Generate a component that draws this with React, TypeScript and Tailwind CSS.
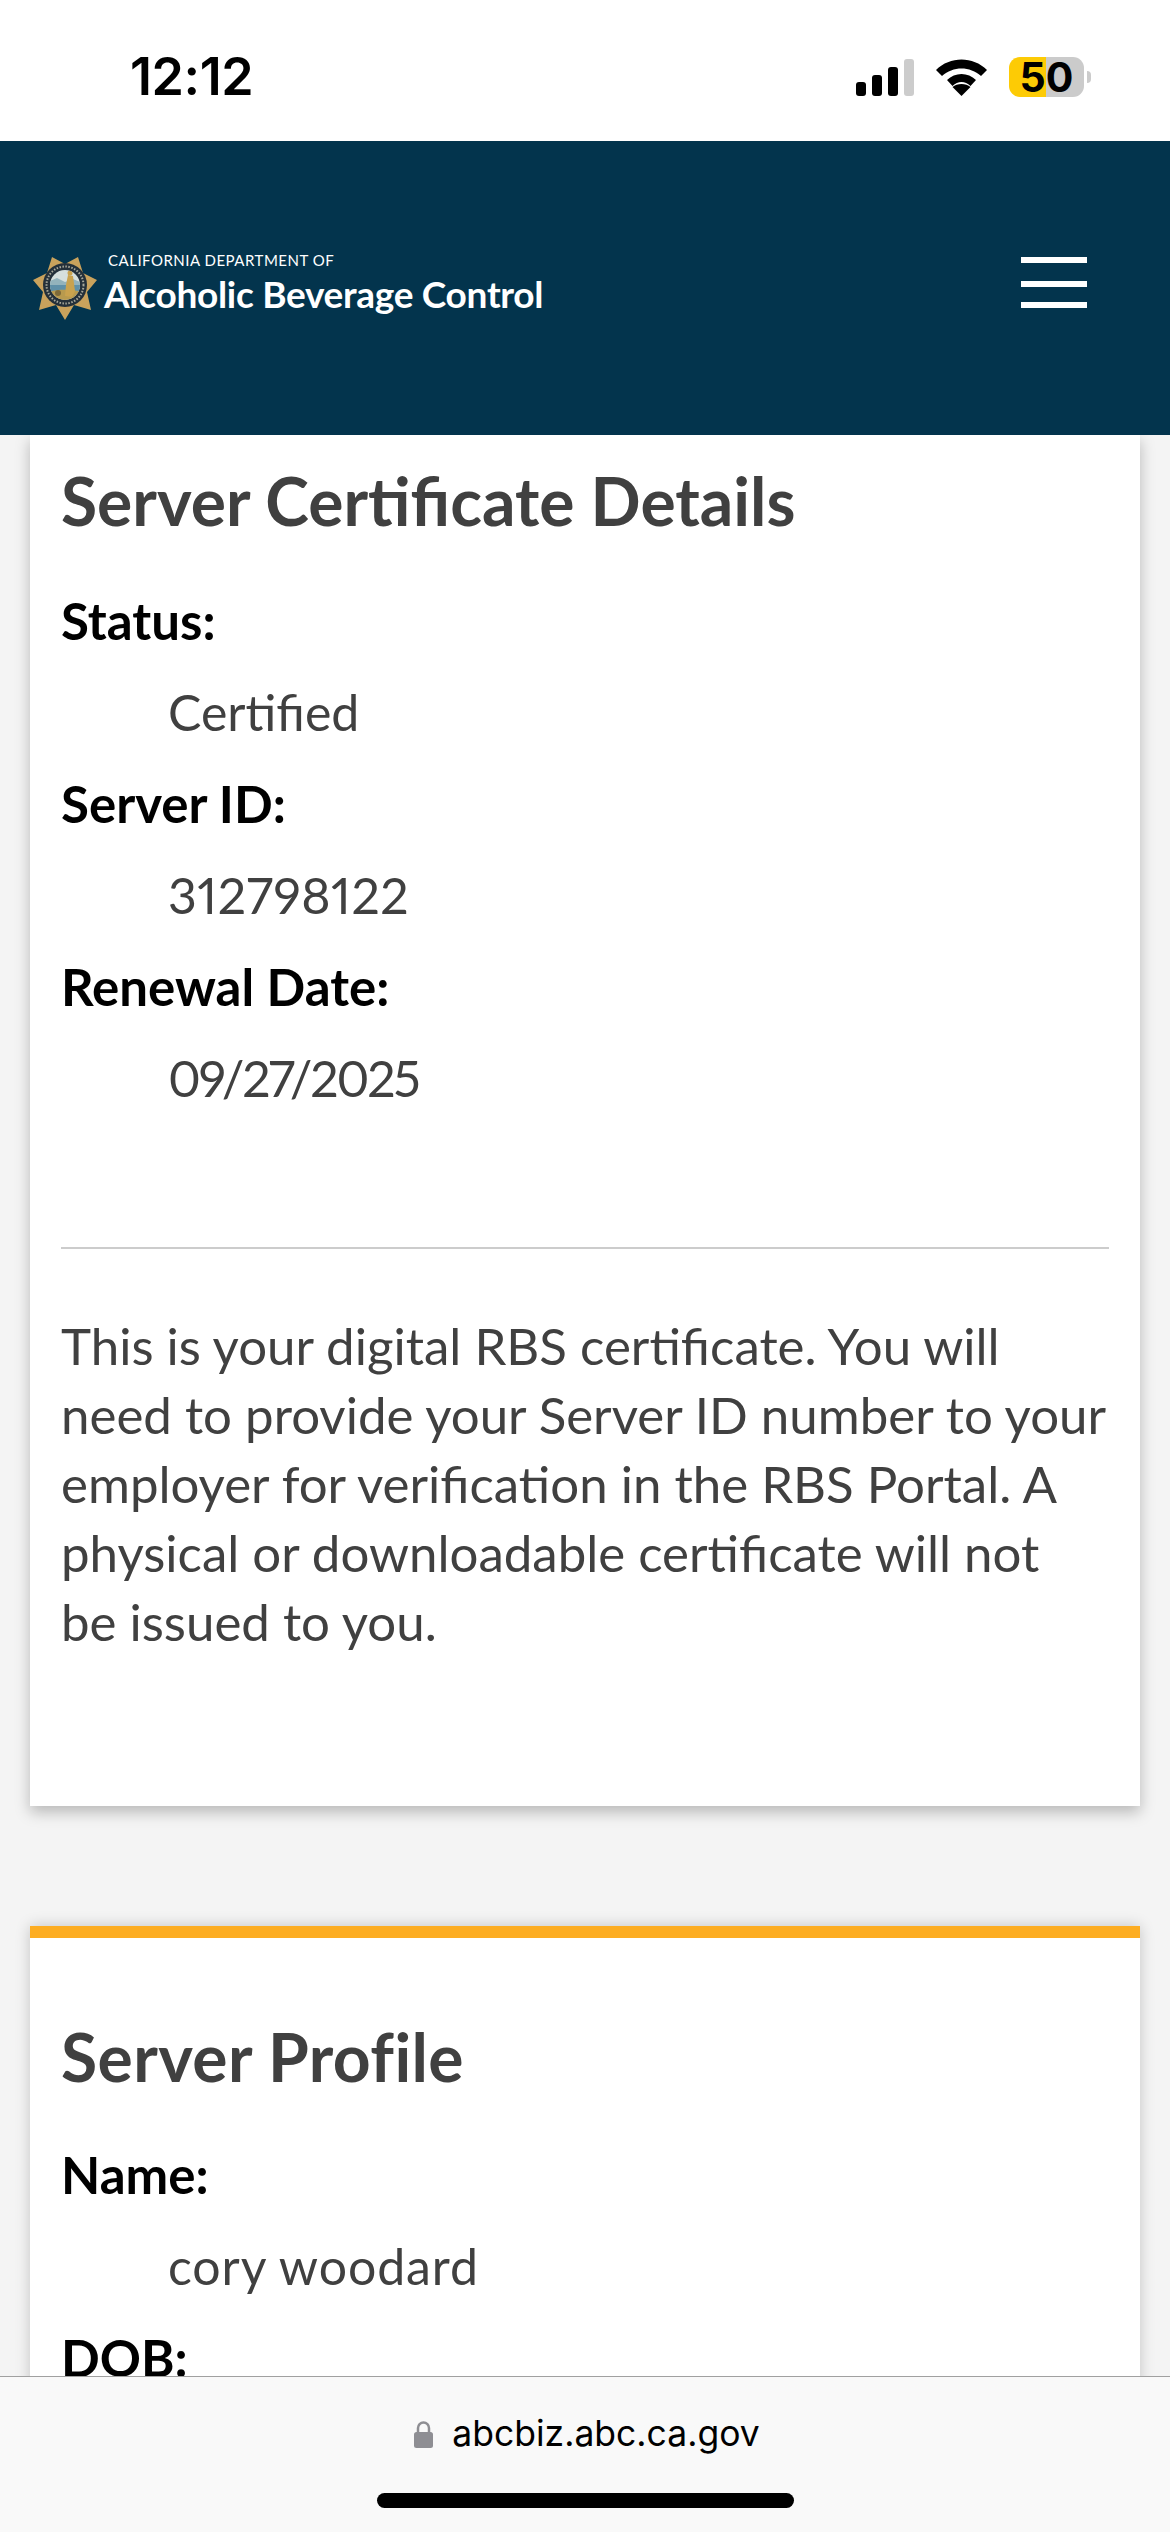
import React from "react";

function Seal() {
  return (
    <svg width="66" height="66" viewBox="0 0 66 66" className="shrink-0">
      <defs>
        <clipPath id="scene">
          <circle cx="32" cy="30" r="15" />
        </clipPath>
      </defs>
      <polygon
        fill="#c9a25c"
        points="32,65 23,50 6,55 10,37 0,25 14,18 19,2 32,9 45,2 50,18 64,25 54,37 58,55 41,50"
      />
      <circle cx="32" cy="30" r="22" fill="#24303a" />
      <circle cx="32" cy="30" r="18.500" fill="none" stroke="#a8a89a" strokeWidth="2" strokeDasharray="1.500 1.500" />
      <g clipPath="url(#scene)">
        <rect x="15" y="14" width="34" height="32" fill="#d6dfdd" />
        <path d="M15 27 L24 23 L32 27 L40 24 L49 28 V34 H15 Z" fill="#93b3bc" />
        <rect x="15" y="30" width="34" height="8" fill="#5f90a8" />
        <path d="M15 37 C24 34 40 34 49 37 V46 H15 Z" fill="#b89a4e" />
        <path d="M35 20 L40 21 L42 36 L39 42 L32 41 L33 30 Z" fill="#c9a24e" />
        <circle cx="37" cy="18" r="2.500" fill="#c9a24e" />
        <circle cx="25" cy="38" r="3" fill="#7d6a3a" />
      </g>
    </svg>
  );
}

function Row({ label, value, valueClass = "" }: { label: string; value: string; valueClass?: string }) {
  return (
    <>
      <dt className="font-bold text-black leading-[91px] text-[51px]">{label}</dt>
      <dd className={`ml-[107px] leading-[92px] text-[50px] text-[#404040] proportional-nums ${valueClass}`}>{value}</dd>
    </>
  );
}

export default function App() {
  return (
    <div className="w-[1170px] h-[2532px] flex flex-col overflow-hidden bg-[#f4f4f4] font-['Lato',sans-serif]">
      {/* status bar */}
      <div className="h-[141px] shrink-0 bg-white flex items-start justify-between pl-[130px] pr-[79px] pt-[46px] font-['Inter',sans-serif]">
        <span className="text-[52px] leading-[62px] font-semibold text-black tracking-[-0.4px]">12:12</span>
        <div className="flex items-start">
          <svg width="58" height="37" viewBox="0 0 58 37" className="mt-[13px]">
            <rect x="0" y="23" width="10" height="14" rx="3" fill="#000" />
            <rect x="16" y="16" width="10" height="21" rx="3" fill="#000" />
            <rect x="32" y="8" width="10" height="29" rx="3" fill="#000" />
            <rect x="48" y="0" width="10" height="37" rx="3" fill="#ccc" />
          </svg>
          <svg width="51" height="37" viewBox="0 0 51 37" className="ml-[22px] mt-[13px]">
            <path d="M0 11 C14 -3 37 -3 51 11 L45 17 C34 7 17 7 6 17 Z" fill="#000" />
            <path d="M11 21 C19 13 32 13 40 21 L34.500 27 C29 21.500 22 21.500 16.500 27 Z" fill="#000" />
            <path d="M25.500 37 L16.500 28 C21 24 30 24 34.500 28 Z" fill="#000" />
          </svg>
          <div className="ml-[22px] mt-[11px] flex items-center">
            <div className="w-[75px] h-[40px] rounded-[11px] flex items-center justify-center bg-[linear-gradient(90deg,#fdcb05_0,#fdcb05_50%,#cbcbcb_50%,#cbcbcb_100%)]">
              <span className="text-[41px] leading-none font-bold text-black">50</span>
            </div>
            <div className="w-[4px] h-[12px] ml-[3px] rounded-r-full bg-[#cbcbcb]" />
          </div>
        </div>
      </div>

      {/* site header */}
      <header className="h-[294px] shrink-0 bg-[#03344d] flex items-center justify-between pl-[33px] pr-[83px] relative z-10">
        <div className="flex items-center gap-[5px] mt-[-1px]">
          <Seal />
          <div className="flex flex-col text-white mt-[-6px]">
            <span className="ml-[4px] mt-[-3px] mb-[3px] text-[15px] leading-[18px] font-normal tracking-[0.5px]">CALIFORNIA DEPARTMENT OF</span>
            <span className="text-[37px] leading-[44px] font-bold tracking-[-0.3px]">Alcoholic Beverage Control</span>
          </div>
        </div>
        <div className="flex flex-col w-[66px] mt-[-11px]">
          <div className="h-[6px] bg-white" />
          <div className="h-[6px] bg-white mt-[18px]" />
          <div className="h-[6px] bg-white mt-[15px]" />
        </div>
      </header>

      {/* page */}
      <main className="flex-1 min-h-0 overflow-hidden px-[30px]">
        <section className="bg-white shadow-[0_6px_14px_rgba(0,0,0,0.25)] px-[31px] h-[1371px] pt-[27px]">
          <h2 className="text-[66px] leading-[78px] font-bold text-[#404040]">Server Certificate Details</h2>
          <dl className="mt-[35px]">
            <Row label="Status:" value="Certified" />
            <Row label="Server ID:" value="312798122" valueClass="tracking-[0.5px]" />
            <Row label="Renewal Date:" value="09/27/2025" valueClass="tracking-[-2.1px]" />
          </dl>
          <hr className="border-0 h-[2px] bg-[#cccccc] mt-[123px]" />
          <p className="mt-[62px] text-[51px] leading-[69px] text-[#404040] whitespace-nowrap">
            This is your digital RBS certificate. You will<br />
            need to provide your Server ID number to your<br />
            employer for verification in the RBS Portal. A<br />
            physical or downloadable certificate will not<br />
            be issued to you.
          </p>
        </section>
        <section className="mt-[120px] bg-white shadow-[0_0_14px_rgba(0,0,0,0.2)] border-t-[12px] border-[#fdad22] px-[31px] pt-[80px] h-[600px]">
          <h2 className="text-[66px] leading-[78px] font-bold text-[#404040] tracking-[0.4px]">Server Profile</h2>
          <dl className="mt-[33px]">
            <Row label="Name:" value="cory woodard" valueClass="tracking-[0.9px]" />
            <dt className="font-bold text-black leading-[91px] text-[51px]">DOB:</dt>
          </dl>
        </section>
      </main>

      {/* browser bar */}
      <footer className="h-[156px] shrink-0 relative z-10 bg-[#f9f9f9] border-t border-[#a0a0a0] flex flex-col items-center font-['Inter',sans-serif]">
        <div className="flex items-center gap-[19px] mt-[35px] ml-[4px] h-[44px]">
          <svg width="19" height="27" viewBox="0 0 19 27">
            <path d="M4 12 V7 a5.500 5.500 0 0 1 11 0 V12" fill="none" stroke="#8e8e93" strokeWidth="2.500" />
            <rect x="0" y="11" width="19" height="16" rx="2.500" fill="#8e8e93" />
          </svg>
          <span className="text-[35.500px] leading-[44px] text-black">abcbiz.abc.ca.gov</span>
        </div>
        <div className="w-[417px] h-[15px] rounded-full bg-black mt-[37px]" />
      </footer>
    </div>
  );
}
